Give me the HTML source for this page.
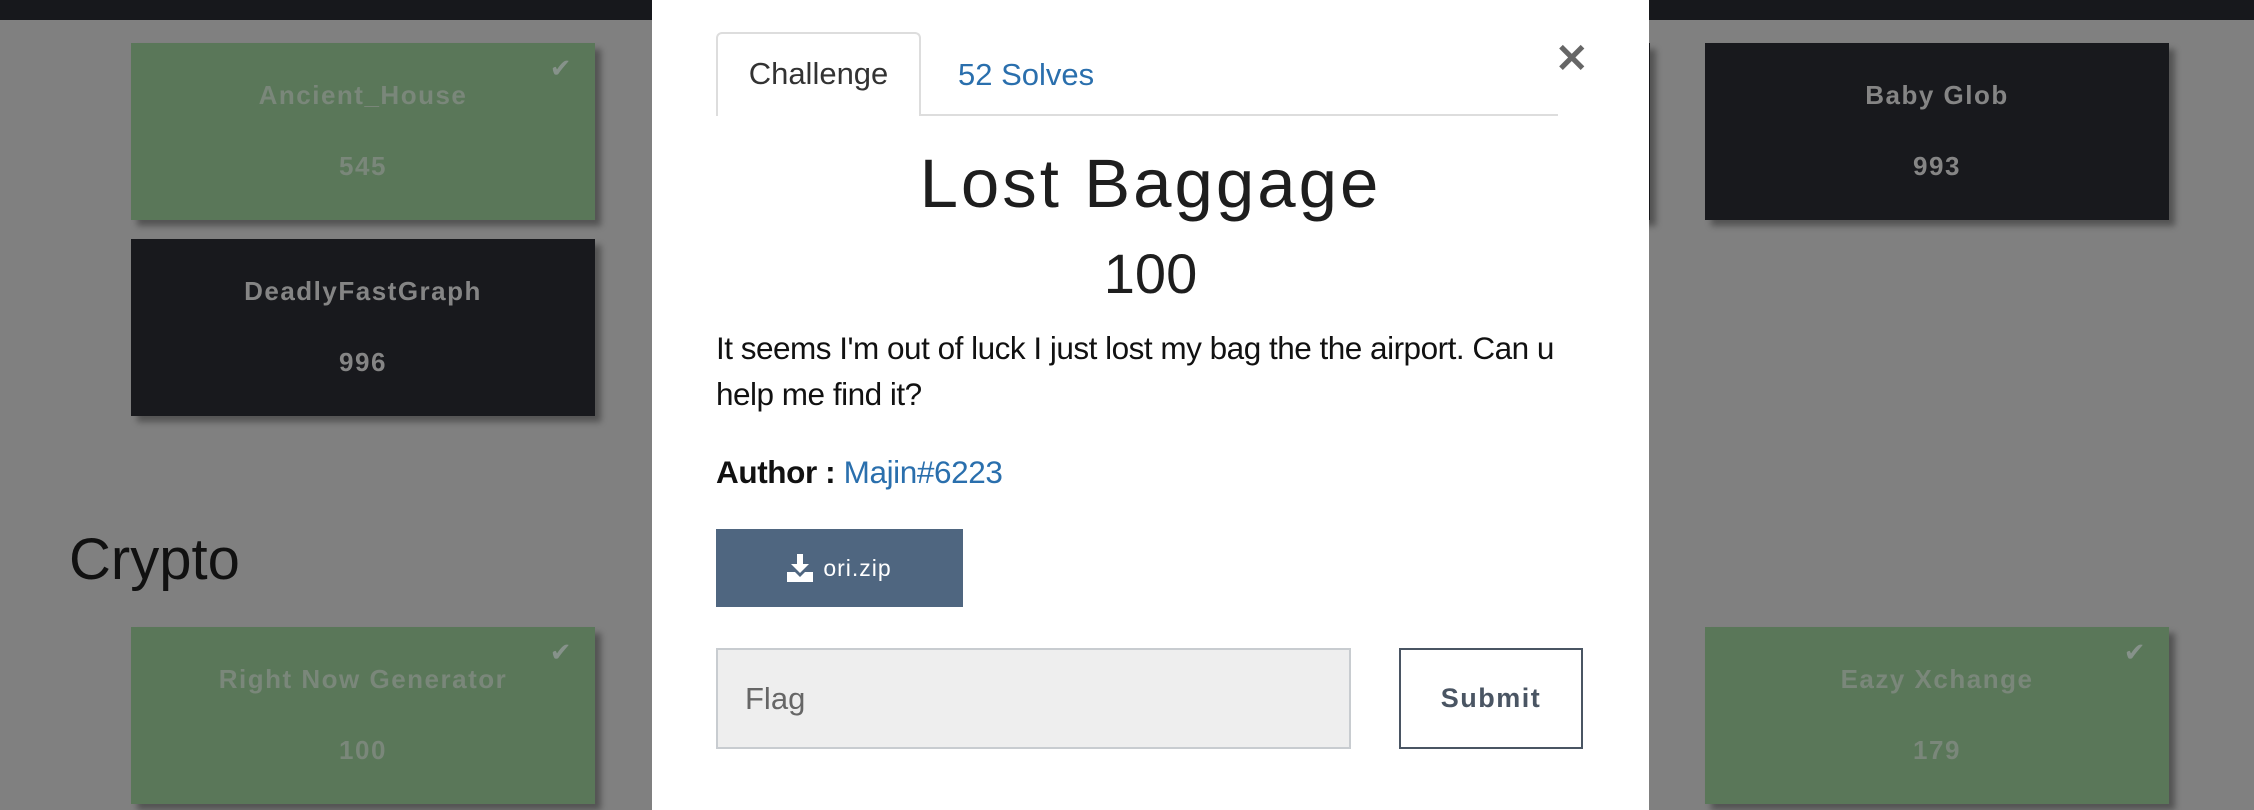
<!DOCTYPE html>
<html><head><style>
body{margin:0;width:2254px;height:810px;overflow:hidden;background:#808080;font-family:"Liberation Sans",sans-serif;position:relative}
.bar{position:absolute;left:0;top:0;width:2254px;height:20px;background:#17181c}
.card{position:absolute;width:464px;height:177px;box-shadow:6px 6px 6px rgba(0,0,0,.35);text-align:center;font-weight:bold;letter-spacing:1.5px;font-size:26px}
.g{background:#5a7759;color:#7a877a}
.d{background:#18191d;color:#858585}
.card .n{position:absolute;left:0;right:0;top:37px}
.card .p{position:absolute;left:0;right:0;top:108px}
.chk{position:absolute;right:22px;top:10px;font-size:26px;color:#86928a;font-weight:normal}
.crypto{position:absolute;left:69px;top:526px;font-size:58px;color:#111}
.modal{position:absolute;left:652px;top:0;width:997px;height:810px;background:#fff}
.tab{position:absolute;left:64px;top:32px;width:205px;height:84px;border:2px solid #ddd;border-bottom:none;border-radius:6px 6px 0 0;background:#fff;box-sizing:border-box;font-size:31px;color:#333;text-align:center;line-height:80px}
.line{position:absolute;left:64px;top:114px;width:842px;height:2px;background:#ddd}
.solves{position:absolute;left:306px;top:57px;font-size:31px;color:#2a6fad}
.x{position:absolute;left:903px;top:36px;font-size:40px;color:#666;font-weight:bold}
h1{position:absolute;left:0;width:997px;top:144px;margin:0;text-align:center;font-weight:normal;font-size:69px;letter-spacing:3px;color:#1e1e1e}
.pts{position:absolute;left:0;width:997px;top:241px;text-align:center;font-size:56px;color:#1e1e1e}
.desc{position:absolute;left:64px;top:325px;width:880px;font-size:31.5px;line-height:46px;color:#111;letter-spacing:-.5px}
.auth{position:absolute;left:64px;top:454px;font-size:31.5px;color:#111;letter-spacing:-.4px}
.auth a{color:#2a6fad}
.btn{position:absolute;left:64px;top:529px;width:247px;height:78px;background:#4f6680;color:#fff;font-size:23px;letter-spacing:1px;display:flex;align-items:center;justify-content:center;gap:10px}
.flag{position:absolute;left:64px;top:648px;width:635px;height:101px;background:#eee;border:2px solid #c8ccd0;box-sizing:border-box;font-size:31px;color:#666;padding-left:27px;line-height:97px}
.sub{position:absolute;left:747px;top:648px;width:184px;height:101px;border:2px solid #4a5563;box-sizing:border-box;font-size:27px;font-weight:bold;letter-spacing:1.5px;color:#4a5563;text-align:center;line-height:97px}
</style></head><body>
<div class="bar"></div>
<div class="card g" style="left:131px;top:43px"><span class="chk">✔</span><div class="n">Ancient_House</div><div class="p">545</div></div>
<div class="card d" style="left:131px;top:239px"><div class="n">DeadlyFastGraph</div><div class="p">996</div></div>
<div class="crypto">Crypto</div>
<div class="card g" style="left:131px;top:627px"><span class="chk">✔</span><div class="n">Right Now Generator</div><div class="p">100</div></div>
<div class="card d" style="left:1705px;top:43px"><div class="n">Baby Glob</div><div class="p">993</div></div>
<div class="card g" style="left:1705px;top:627px"><span class="chk">✔</span><div class="n">Eazy Xchange</div><div class="p">179</div></div>
<div class="card d" style="left:1180px;top:43px;width:470px"></div>
<div class="modal">
<div class="line"></div>
<div class="tab">Challenge</div>
<div class="solves">52 Solves</div>
<div class="x">✕</div>
<h1>Lost Baggage</h1>
<div class="pts">100</div>
<div class="desc">It seems I'm out of luck I just lost my bag the the airport. Can u help me find it?</div>
<div class="auth"><b>Author :</b> <a>Majin#6223</a></div>
<div class="btn"><svg width="26" height="28" viewBox="0 0 26 28"><path d="M10 0h6v10h6l-9 9-9-9h6z" fill="#fff"/><path d="M0 18h8l5 5 5-5h8v10H0z" fill="#fff"/></svg><span>ori.zip</span></div>
<div class="flag">Flag</div>
<div class="sub">Submit</div>
</div>
</body></html>
